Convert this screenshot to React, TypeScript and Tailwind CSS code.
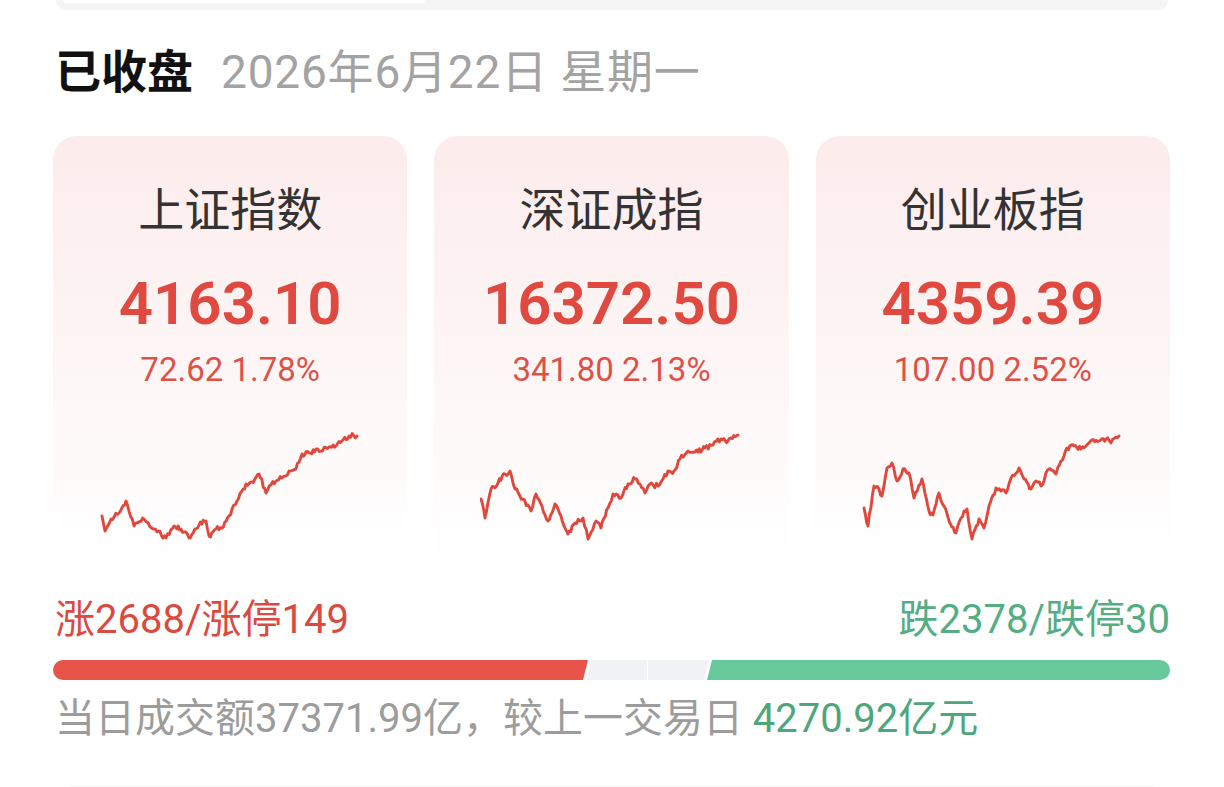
import React from "react";

type Pt = [number, number];

function mulberry32(seed: number) {
  let a = seed;
  return function () {
    a |= 0;
    a = (a + 0x6d2b79f5) | 0;
    let t = Math.imul(a ^ (a >>> 15), 1 | a);
    t = (t + Math.imul(t ^ (t >>> 7), 61 | t)) ^ t;
    return ((t ^ (t >>> 14)) >>> 0) / 4294967296;
  };
}

function buildPath(keys: Pt[], seed: number): string {
  const r = mulberry32(seed);
  const pts: Pt[] = [];
  for (let i = 0; i < keys.length - 1; i++) {
    const [x1, y1] = keys[i];
    const [x2, y2] = keys[i + 1];
    const steps = Math.max(1, Math.round((x2 - x1) / 1.5));
    for (let s = 0; s < steps; s++) {
      const t = s / steps;
      const x = x1 + (x2 - x1) * t;
      const y = y1 + (y2 - y1) * t + (s === 0 ? 0 : (r() - 0.5) * 5);
      pts.push([x, y]);
    }
  }
  pts.push(keys[keys.length - 1]);
  return pts.map((p, i) => `${i === 0 ? "M" : "L"}${p[0].toFixed(1)} ${p[1].toFixed(1)}`).join(" ");
}

const chart1: Pt[] = [
  [103, 515], [106, 530], [112, 518], [120, 512], [127, 500], [135, 525], [145, 518], [155, 528],
  [167, 537], [175, 525], [182, 528], [190, 537], [200, 524], [207, 520], [210, 535], [217, 528],
  [223, 527], [230, 515], [238, 500], [247, 483], [253, 481], [260, 473], [267, 492], [272, 484],
  [277, 480], [284, 476], [290, 470], [297, 468], [303, 453], [310, 452], [317, 448], [322, 450],
  [330, 446], [337, 445], [343, 440], [350, 435], [358, 435],
];

const chart2: Pt[] = [
  [483, 498], [487, 517], [493, 488], [500, 482], [507, 473], [512, 470], [517, 488], [525, 498],
  [533, 510], [538, 493], [544, 505], [550, 520], [557, 503], [563, 515], [570, 533], [577, 522],
  [585, 517], [590, 538], [598, 520], [603, 527], [610, 507], [615, 493], [623, 497], [630, 483],
  [637, 478], [642, 483], [647, 492], [652, 483], [660, 485], [665, 478], [670, 470], [676, 470],
  [682, 458], [690, 450], [697, 451], [707, 447], [715, 444], [723, 438], [730, 440], [740, 434],
];

const chart3: Pt[] = [
  [865, 507], [869, 525], [875, 485], [880, 488], [883, 495], [888, 467], [893, 462], [898, 480],
  [904, 468], [910, 472], [915, 497], [923, 478], [930, 510], [934, 514], [940, 492], [945, 505],
  [950, 520], [957, 532], [962, 517], [968, 508], [973, 538], [980, 518], [985, 527], [990, 505],
  [997, 487], [1002, 490], [1007, 492], [1012, 477], [1020, 467], [1025, 478], [1032, 488],
  [1037, 480], [1042, 485], [1050, 468], [1057, 473], [1062, 460], [1068, 447], [1075, 445],
  [1082, 448], [1090, 442], [1093, 439], [1100, 440], [1107, 438], [1112, 442], [1120, 435],
];

const cards = [
  { name: "上证指数", value: "4163.10", change: "72.62 1.78%", keys: chart1, seed: 11, x0: 100 },
  { name: "深证成指", value: "16372.50", change: "341.80 2.13%", keys: chart2, seed: 23, x0: 482 },
  { name: "创业板指", value: "4359.39", change: "107.00 2.52%", keys: chart3, seed: 37, x0: 863 },
];

const font = { fontFamily: 'Roboto, "Noto Sans CJK SC", "Noto Sans", sans-serif' };

export default function App() {
  const up = 535;
  const down = 463;
  return (
    <div className="w-[1224px] h-[787px] bg-white overflow-hidden" style={font}>
      {/* end of the panel above */}
      <div className="mx-[56px] h-[10px] bg-[#f5f5f5] rounded-b-[18px]">
        <div className="ml-[7px] w-[362px] h-[3px] bg-white rounded-b-[10px]" />
      </div>

      {/* header */}
      <div className="mt-[34px] px-[55px] flex items-baseline gap-[28px] h-[56px] leading-[56px]">
        <span className="text-[46px] font-bold text-[#111]">已收盘</span>
        <span className="text-[46px] text-[#a3a3a3] tracking-[0.8px]">2026年6月22日 星期一</span>
      </div>

      {/* cards */}
      <div className="mt-[36px] pl-[53px] pr-[54px] grid grid-cols-3 gap-[27px]">
        {cards.map((c) => (
          <div
            key={c.name}
            className="h-[430px] rounded-[24px] bg-linear-to-b from-[#fcecec] via-[#fef7f7] via-60% to-white flex flex-col items-center"
          >
            <div className="mt-[46px] h-[56px] leading-[56px] text-[46px] text-[#333]">{c.name}</div>
            <div className="mt-[31px] h-[70px] leading-[70px] text-[60px] font-semibold text-[#e0493f]">{c.value}</div>
            <div className="mt-[11px] h-[40px] leading-[40px] text-[33px] text-[#dc5248]">{c.change}</div>
            <svg
              className="mt-[40px]"
              width="262"
              height="112"
              viewBox={`${c.x0} 429 262 112`}
            >
              <path
                d={buildPath(c.keys, c.seed)}
                fill="none"
                stroke="#e0483d"
                strokeWidth="2.9"
                strokeLinejoin="round"
                strokeLinecap="round"
              />
            </svg>
          </div>
        ))}
      </div>

      {/* up / down stats */}
      <div className="mt-[30px] pl-[55px] pr-[54px] flex justify-between h-[48px] leading-[48px] text-[40px]">
        <span className="text-[#db4a40]">涨2688/涨停149</span>
        <span className="text-[#55ad83]">跌2378/跌停30</span>
      </div>

      {/* ratio bar */}
      <div className="mt-[16px] pl-[53px] pr-[54px] flex h-[20px] gap-[3px]">
        <div
          className="h-full bg-[#e8544a] rounded-l-full [clip-path:polygon(0_0,100%_0,calc(100%-5px)_100%,0_100%)]"
          style={{ width: up }}
        />
        <div className="flex-1 h-full flex gap-[1px] -ml-[5px] -mr-[5px]">
          <div className="flex-1 h-full bg-[#f1f2f4] [clip-path:polygon(5px_0,100%_0,100%_100%,0_100%)]" />
          <div className="flex-1 h-full bg-[#f1f2f4] [clip-path:polygon(0_0,100%_0,calc(100%-5px)_100%,0_100%)]" />
        </div>
        <div
          className="h-full bg-[#67c99b] rounded-r-full [clip-path:polygon(5px_0,100%_0,100%_100%,0_100%)]"
          style={{ width: down }}
        />
      </div>

      {/* turnover */}
      <div className="mt-[15px] px-[55px] h-[48px] leading-[48px] text-[40px] text-[#9c9c9c] whitespace-nowrap">
        当日成交额37371.99亿，较上一交易日 <span className="text-[#4ea67c]">4270.92亿元</span>
      </div>

      {/* start of the next panel */}
      <div className="mt-[43px] mx-[62px] h-[20px] bg-[#f7f7f7] rounded-t-[10px]" />
    </div>
  );
}
